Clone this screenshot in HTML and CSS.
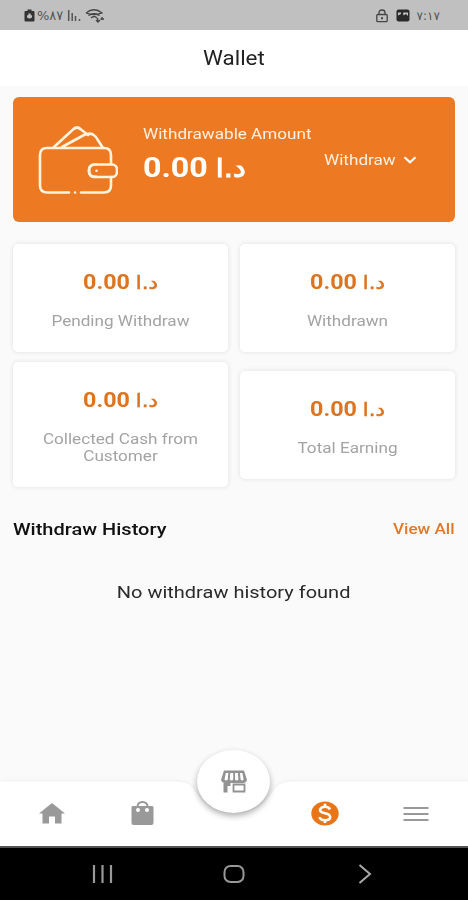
FILE: index.html
```html
<!DOCTYPE html>
<html lang="en">
<head>
<meta charset="utf-8">
<title>Wallet</title>
<link rel="stylesheet" href="styles.css">
</head>
<body>
<div class="phone">
  <div class="status">
    <div class="status-group">
      <svg width="11" height="13" viewBox="0 0 11 13"><path d="M3.500 .5h4v1.500h2q1 0 1 1v8.500q0 1-1 1h-8q-1 0-1-1V3q0-1 1-1h2z" fill="#333"/><path d="M5.500 4.500v5M3 7.500h5" stroke="#c0c0c0" stroke-width="2.400"/></svg>
      <span class="battery">%٨٧</span>
      <svg class="signal" width="15" height="12" viewBox="0 0 15 12"><path d="M1.700 0v11M5.200 3v8M8.500 6v5M12.500 9v2" stroke="#555" stroke-width="1.500"/></svg>
      <svg class="wifi" width="20" height="14" viewBox="0 0 20 14" fill="none" stroke="#444"><path d="M1 4Q9 -2.500 17 4Q9 7 1 4M3.500 6.500Q9 3 14.500 6.500M6 9Q9 6 12 9" stroke-width="1.300"/><path d="M12.700 9v4M17 8v3M15.500 10h3.500M11 11l2 2 2-2" stroke-width="1.300"/></svg>
    </div>
    <div class="status-group">
      <svg width="12" height="14" viewBox="0 0 12 14" fill="none" stroke="#444" stroke-width="1.300"><rect x=".8" y="5.500" width="10.400" height="7.200" rx="1"/><path d="M3 5.500V3.800Q3 1 6 1t3 2.800v1.700"/><path d="M5 9.200h2" stroke-width="2"/></svg>
      <svg class="gallery" width="14" height="13" viewBox="0 0 14 13"><rect x=".5" y=".5" width="13" height="12" rx="2" fill="#2a2a2a"/><path d="M2 3.500h3v1.500l-3 1.500zM7 3.500h5v3.500L10 5 7.500 6.500z" fill="#c0c0c0"/></svg>
      <span class="clock">٧:١٧</span>
    </div>
  </div>

  <header class="header"><h1 class="wide">Wallet</h1></header>

  <main class="content">
    <section class="banner">
      <svg class="wallet" width="80" height="72" viewBox="0 0 80 72" fill="none" stroke="#fff3dd" stroke-width="2.600" stroke-linecap="round" stroke-linejoin="round">
        <path d="M31 68.500H9q-7 0-7-7V31q0-7 7-7h57q7 0 7 7v9M73 53v8.500q0 7-7 7H43M37 68.500h.1"/>
        <path d="M16 23L35 5.500q4-4 8 0l7 5.500M24 23L46 11q5-2.500 9-.5 3 2 4.500 5L65 24"/>
        <rect x="51" y="40.500" width="28" height="12.500" rx="5"/><path d="M51 46.700q0-6.200 7-6.200M51 46.700q0 6.200 7 6.200M58.500 46.800h.1"/>
      </svg>
      <div class="balance">
        <p class="balance-label wide">Withdrawable Amount</p>
        <p class="balance-value wide">0.00 <bdi>د.ا</bdi></p>
      </div>
      <div class="method"><span class="wide">Withdraw</span>
        <svg width="14" height="8" viewBox="0 0 14 8"><path d="M1.500 1.300L7 6.300l5.500-5" fill="none" stroke="#fff" stroke-width="2.200"/></svg>
      </div>
    </section>

    <section class="cards">
      <div class="card"><p class="amount wide">0.00 <bdi>د.ا</bdi></p><p class="label wide">Pending Withdraw</p></div>
      <div class="card"><p class="amount wide">0.00 <bdi>د.ا</bdi></p><p class="label wide">Withdrawn</p></div>
      <div class="card"><p class="amount wide">0.00 <bdi>د.ا</bdi></p><p class="label wide">Collected Cash from<br>Customer</p></div>
      <div class="card"><p class="amount wide">0.00 <bdi>د.ا</bdi></p><p class="label wide">Total Earning</p></div>
    </section>

    <div class="history-head"><h2 class="wide">Withdraw History</h2><a class="wide">View All</a></div>
    <p class="empty"><span class="wide">No withdraw history found</span></p>
  </main>

  <nav class="tabs">
    <svg class="notch" width="468" height="66" viewBox="0 0 468 66"><path d="M0 1.500H174C187 1.500 191 5 195 11C204 26 218 33 234 33S264 26 273 11C277 5 281 1.500 294 1.500H468V66H0z" fill="#fff"/></svg>
    <div class="tab"><svg width="26" height="21" viewBox="0 0 26 21"><path d="M13 0L26 10.500h-3.500V20.500H16V13.500H10V20.500H3.500V10.500H0z" fill="#999"/></svg></div>
    <div class="tab"><svg width="23" height="25" viewBox="0 0 23 25"><path d="M6.500 9V6q0-5 5-5t5 5v3" fill="none" stroke="#999" stroke-width="2"/><path d="M2 5h19q1.500 0 1.500 1.500v15.500q0 2-2 2h-18q-2 0-2-2V6.500Q.5 5 2 5z" fill="#999"/><circle cx="7" cy="9" r="2" fill="#fff"/><circle cx="16" cy="9" r="2" fill="#fff"/></svg></div>
    <div class="tab"></div>
    <div class="tab"><svg width="28" height="25" viewBox="0 0 28 25"><ellipse cx="14" cy="12.500" rx="13.700" ry="12" fill="#ea7517"/><path d="M19 8.500Q18 5.800 14 5.800T9 8.800Q9 11.300 14 12.300T19.200 16Q19.200 19.200 14 19.200T8.700 16M14 2.800v3M14 19v3" fill="none" stroke="#fff" stroke-width="2.600"/></svg></div>
    <div class="tab"><svg width="26" height="16" viewBox="0 0 26 16"><path d="M.5 2h25M.5 8h25M.5 14h25" stroke="#999" stroke-width="2"/></svg></div>
    <div class="fab"><svg width="26" height="23" viewBox="0 0 26 23"><path d="M3 .5h20l3 9.500q-1 3-4 3H4Q1 13 0 10z" fill="#929292"/><path d="M4.800 3L3.500 9.500q1.500 2 3.300 0L7.300 3zM9.300 3l-.5 6.500q1.800 2 3.400 0V3zM14 3v6.500q1.500 2 3.400 0L16.900 3zM19 3l.6 6.500q1.500 2 3 0L21.400 3z" fill="#fff"/><path d="M12.500 14.500h11v7h-11z" fill="none" stroke="#929292" stroke-width="1.800"/><path d="M2.500 13h7v3h-3v6.500h-4z" fill="#929292"/></svg></div>
  </nav>

  <div class="system">
    <svg width="22" height="18" viewBox="0 0 22 18"><path d="M2 0v18M10.500 0v18M19 0v18" stroke="#999" stroke-width="2.200"/></svg>
    <svg width="22" height="20" viewBox="0 0 22 20"><rect x="1.500" y="2" width="19" height="16" rx="6" fill="none" stroke="#999" stroke-width="2"/></svg>
    <svg width="14" height="20" viewBox="0 0 14 20"><path d="M1.500 1L12 10 1.500 19" fill="none" stroke="#aaa" stroke-width="2"/></svg>
  </div>
</div>
</body>
</html>
```
FILE: styles.css
```css
* { box-sizing: border-box; margin: 0; padding: 0; }
body { font-family: Roboto, "DejaVu Sans", sans-serif; background: #fafafa; }
svg { display: block; flex: none; }
.phone { width: 468px; height: 900px; display: flex; flex-direction: column; overflow: hidden; }
.wide { transform: scaleX(1.15); transform-origin: center; display: block; white-space: nowrap; }

.status { height: 30px; background: #c0c0c0; display: flex; justify-content: space-between; align-items: center; padding: 1px 28px 0 24px; }
.status-group { display: flex; align-items: center; }
.battery, .clock { font: 12px "DejaVu Sans", sans-serif; color: #555; direction: ltr; unicode-bidi: bidi-override; }
.battery { font-size: 13px; margin-left: 2px; }
.signal { margin-left: 4px; }
.wifi { margin-left: 3px; }
.gallery { margin: 0 7px 0 8px; }

.header { height: 56px; background: #fff; display: flex; justify-content: center; align-items: center; }
.header h1 { font-size: 19.5px; font-weight: 400; color: #222; }

.content { flex: 1; padding: 11px 13px 0; }
.banner { height: 125px; border-radius: 6px; background: #ed7a22; display: flex; color: #fff; }
.wallet { margin: 27px 0 0 25px; }
.balance { width: 206px; padding: 28px 0 0 25px; }
.balance .wide, .method .wide, .history-head h2 { transform-origin: left; }
.balance-label { font-size: 14.900px; line-height: 19px; color: #fff0e2; }
.balance-value { font-size: 28px; line-height: 36px; font-weight: 700; margin-top: 6px; }
.wide bdi { font-family: "DejaVu Sans", sans-serif; font-weight: 400; line-height: 1; -webkit-text-stroke: .5px currentColor; }
.balance-value bdi { font-size: 25px; -webkit-text-stroke-width: 1px; }
.method { display: flex; align-items: center; height: 125px; font-size: 14.900px; color: #fff0e2; }
.method svg { margin-left: 17px; }

.cards { display: grid; grid-template-columns: 215px 215px; column-gap: 12px; row-gap: 10px; align-items: center; margin-top: 22px; }
.card { background: #fff; border-radius: 5px; box-shadow: 0 0 5px rgba(0, 0, 0, .11); padding: 25px 0 22px; text-align: center; }
.amount { height: 26px; font-size: 20.300px; line-height: 26px; font-weight: 700; color: #dc7420; }
.amount bdi { font-size: 18.500px; }
.label { font-size: 14.900px; line-height: 17px; margin-top: 18px; color: #a3a3a3; }

.history-head { display: flex; justify-content: space-between; align-items: center; height: 24px; margin-top: 30px; }
.history-head h2 { font-size: 17.400px; font-weight: 500; color: #111; }
.history-head a { font-size: 14.900px; font-weight: 500; color: #e0782a; transform-origin: right; }
.empty { display: flex; justify-content: center; margin-top: 39px; font-size: 17.400px; line-height: 24px; color: #2a2a2a; }

.tabs { position: relative; height: 66px; display: flex; align-items: center; padding: 1px 6px 0; }
.notch { position: absolute; left: 0; top: 0; filter: drop-shadow(0 0 2px rgba(0, 0, 0, .07)); }
.tab { position: relative; flex: 1; display: flex; justify-content: center; }
.fab { position: absolute; left: 197px; top: -30px; width: 73px; height: 63px; border-radius: 50%; background: #fff; box-shadow: 0 3px 6px rgba(0, 0, 0, .32); display: flex; align-items: center; justify-content: center; }

.system { height: 54px; background: #000; border-top: 2px solid #555; display: flex; align-items: center; justify-content: space-between; padding: 0 96px 0 92px; }
.system svg:nth-child(2) { margin-right: 5px; }
```
